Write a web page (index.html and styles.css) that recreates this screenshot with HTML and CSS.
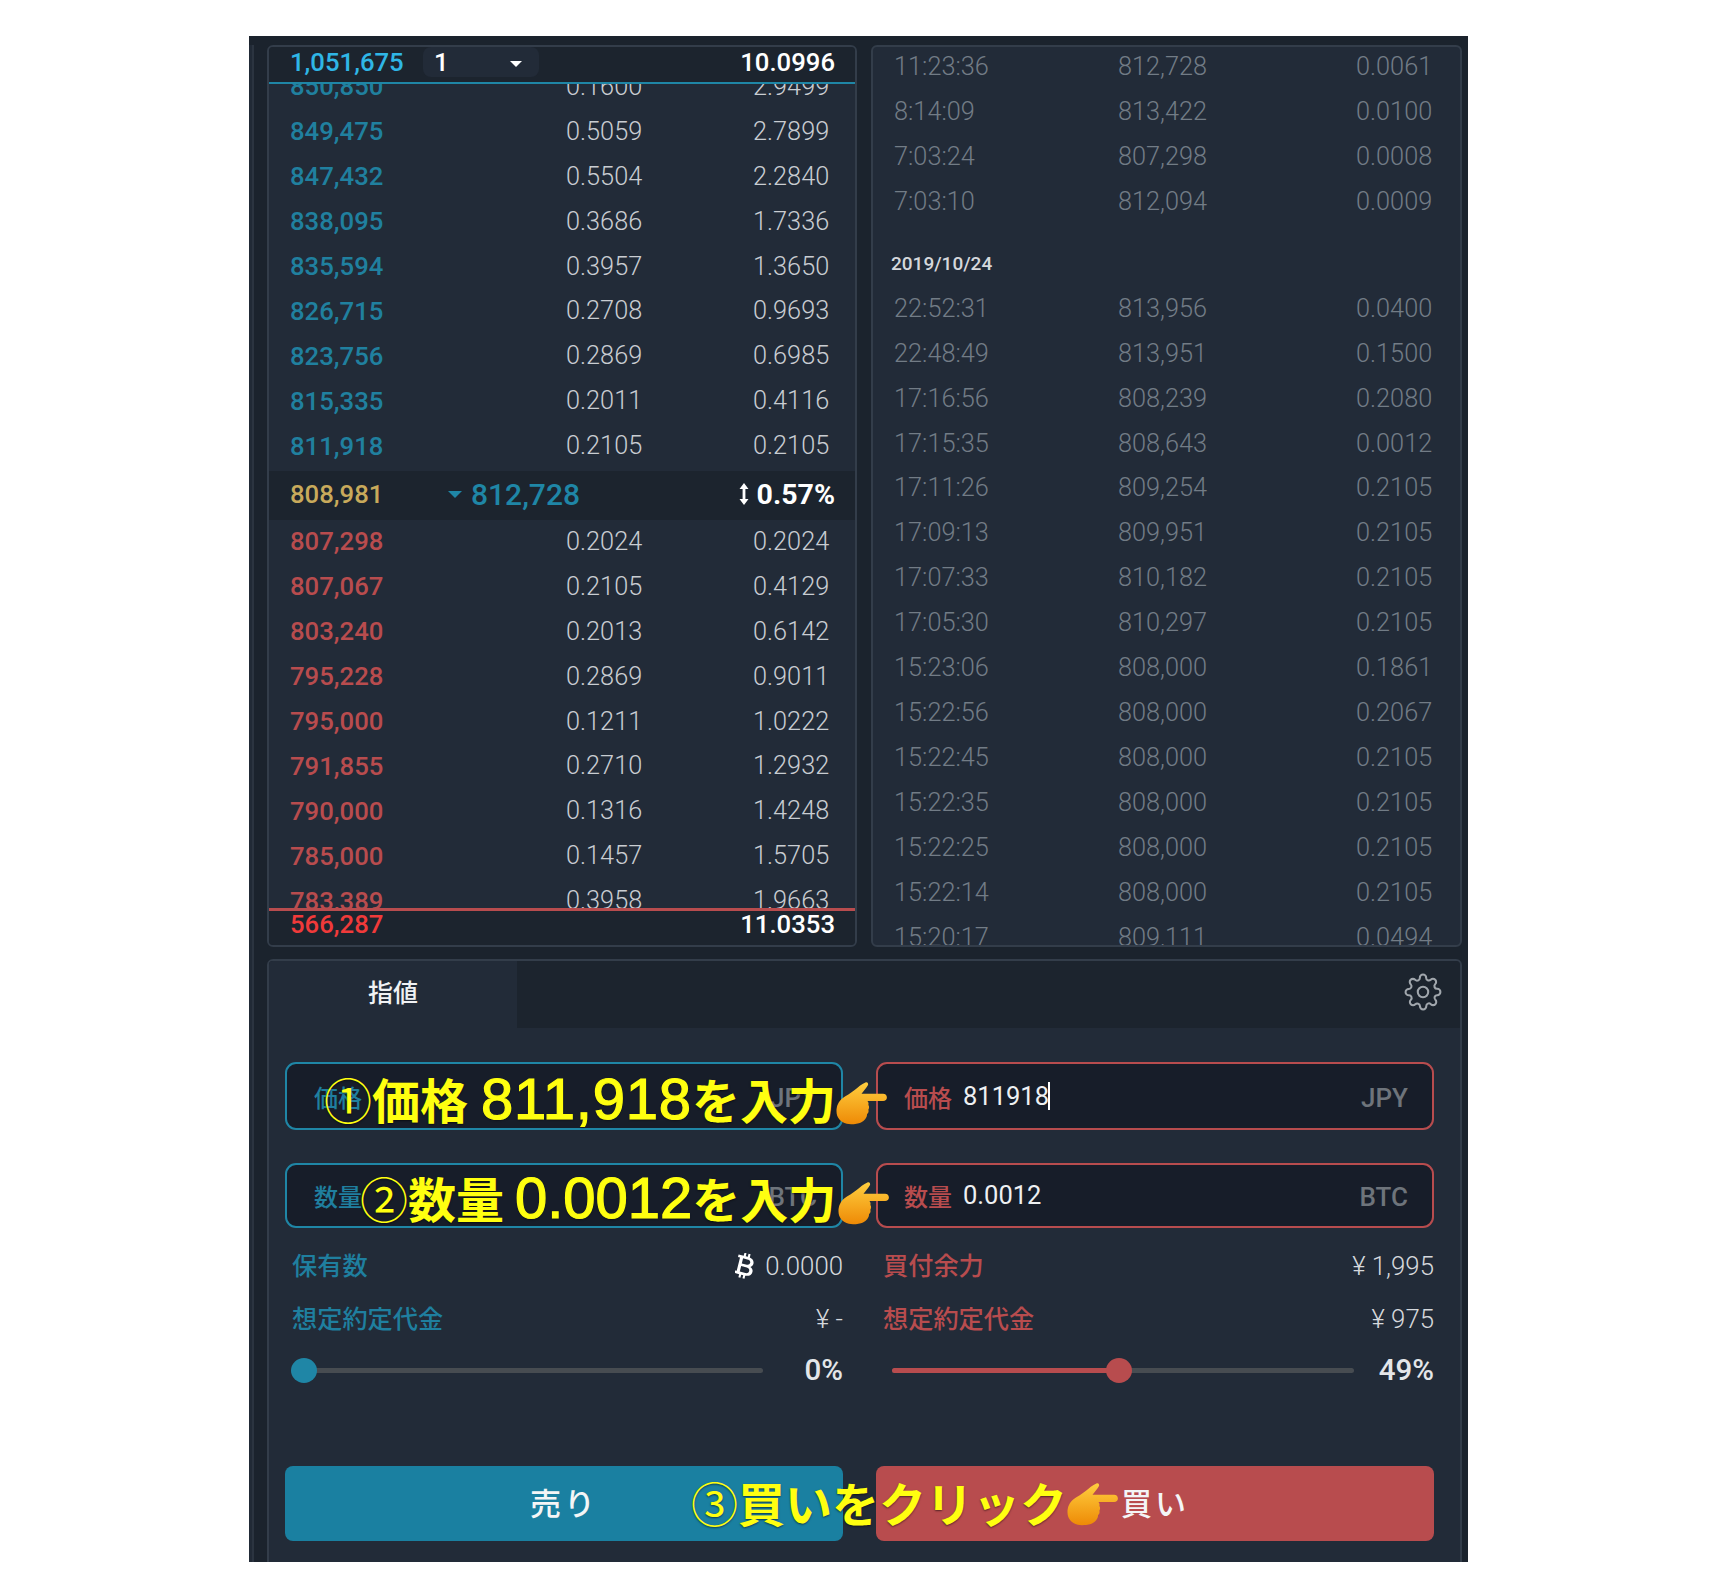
FILE: index.html
```html
<!DOCTYPE html>
<html lang="ja">
<head>
<meta charset="utf-8">
<title>注文</title>
<link rel="stylesheet" href="styles.css">
</head>
<body>
<svg class="defs" width="0" height="0" aria-hidden="true">
  <defs>
    <linearGradient id="handfill" x1="0" y1="0" x2="0" y2="1">
      <stop offset="0" stop-color="#ffcf3f"/>
      <stop offset="1" stop-color="#ee8a06"/>
    </linearGradient>
    <symbol id="hand" viewBox="0 0 52 44">
      <path fill="url(#handfill)" d="M30 1c2-.8 3.500 1 2.500 3-1.500 2.800-4 5.500-6.500 8.500h22c2.400 0 3.900 1.700 3.900 3.800S50.400 20 48 20H32c1 1 1.500 2.600 1 4 1 1.400 1 3.400 0 4.800.6 1.700 0 3.400-1.300 4.500 0 3.700-2.700 7-6.200 8.500-3.500 1.500-10 2.400-14.500 1.400C4.500 41.500.5 37 .5 30.500c0-5.500 2-10 6.500-13.500 3-2.300 8-5 12-8.300C22.500 6 26 2.500 30 1z"/>
    </symbol>
  </defs>
</svg>
<main class="app">
  <div class="stub"></div>
  <section class="top">
    <div class="panel book">
      <header class="book-head">
        <span class="total-price ask">1,051,675</span>
        <span class="select"><span>1</span><i class="caret"></i></span>
        <span class="total-size">10.0996</span>
      </header>
      <div class="book-list">
        <div class="book-rows">
          <div class="row sell"><b>850,850</b><span>0.1600</span><span>2.9499</span></div>
          <div class="row sell"><b>849,475</b><span>0.5059</span><span>2.7899</span></div>
          <div class="row sell"><b>847,432</b><span>0.5504</span><span>2.2840</span></div>
          <div class="row sell"><b>838,095</b><span>0.3686</span><span>1.7336</span></div>
          <div class="row sell"><b>835,594</b><span>0.3957</span><span>1.3650</span></div>
          <div class="row sell"><b>826,715</b><span>0.2708</span><span>0.9693</span></div>
          <div class="row sell"><b>823,756</b><span>0.2869</span><span>0.6985</span></div>
          <div class="row sell"><b>815,335</b><span>0.2011</span><span>0.4116</span></div>
          <div class="row sell"><b>811,918</b><span>0.2105</span><span>0.2105</span></div>
          <div class="mid">
            <span class="mid-spot">808,981</span>
            <span class="mid-last"><i class="caret teal"></i>812,728</span>
            <span class="mid-pct">
              <svg class="updown" viewBox="0 0 10 22" aria-hidden="true"><path fill="#fff" d="M5 0l4.500 6H6.400v10H9.500L5 22 .5 16h3.100V6H.5z"/></svg>
              0.57%
            </span>
          </div>
          <div class="row buy"><b>807,298</b><span>0.2024</span><span>0.2024</span></div>
          <div class="row buy"><b>807,067</b><span>0.2105</span><span>0.4129</span></div>
          <div class="row buy"><b>803,240</b><span>0.2013</span><span>0.6142</span></div>
          <div class="row buy"><b>795,228</b><span>0.2869</span><span>0.9011</span></div>
          <div class="row buy"><b>795,000</b><span>0.1211</span><span>1.0222</span></div>
          <div class="row buy"><b>791,855</b><span>0.2710</span><span>1.2932</span></div>
          <div class="row buy"><b>790,000</b><span>0.1316</span><span>1.4248</span></div>
          <div class="row buy"><b>785,000</b><span>0.1457</span><span>1.5705</span></div>
          <div class="row buy"><b>783,389</b><span>0.3958</span><span>1.9663</span></div>
        </div>
      </div>
      <footer class="book-foot">
        <span class="total-price bid">566,287</span>
        <span class="total-size">11.0353</span>
      </footer>
    </div>
    <div class="panel trades">
      <div class="trade-list">
        <div class="trade"><span>11:23:36</span><span>812,728</span><span>0.0061</span></div>
        <div class="trade"><span>8:14:09</span><span>813,422</span><span>0.0100</span></div>
        <div class="trade"><span>7:03:24</span><span>807,298</span><span>0.0008</span></div>
        <div class="trade"><span>7:03:10</span><span>812,094</span><span>0.0009</span></div>
        <div class="trade-date">2019/10/24</div>
        <div class="trade"><span>22:52:31</span><span>813,956</span><span>0.0400</span></div>
        <div class="trade"><span>22:48:49</span><span>813,951</span><span>0.1500</span></div>
        <div class="trade"><span>17:16:56</span><span>808,239</span><span>0.2080</span></div>
        <div class="trade"><span>17:15:35</span><span>808,643</span><span>0.0012</span></div>
        <div class="trade"><span>17:11:26</span><span>809,254</span><span>0.2105</span></div>
        <div class="trade"><span>17:09:13</span><span>809,951</span><span>0.2105</span></div>
        <div class="trade"><span>17:07:33</span><span>810,182</span><span>0.2105</span></div>
        <div class="trade"><span>17:05:30</span><span>810,297</span><span>0.2105</span></div>
        <div class="trade"><span>15:23:06</span><span>808,000</span><span>0.1861</span></div>
        <div class="trade"><span>15:22:56</span><span>808,000</span><span>0.2067</span></div>
        <div class="trade"><span>15:22:45</span><span>808,000</span><span>0.2105</span></div>
        <div class="trade"><span>15:22:35</span><span>808,000</span><span>0.2105</span></div>
        <div class="trade"><span>15:22:25</span><span>808,000</span><span>0.2105</span></div>
        <div class="trade"><span>15:22:14</span><span>808,000</span><span>0.2105</span></div>
        <div class="trade"><span>15:20:17</span><span>809,111</span><span>0.0494</span></div>
      </div>
    </div>
  </section>
  <section class="panel order">
    <div class="tabs">
      <div class="tab">指値</div>
      <svg class="gear" viewBox="0 0 24 24" aria-hidden="true">
        <circle cx="12" cy="12" r="3.300"/>
        <path d="M19.400 15a1.650 1.650 0 0 0 .33 1.820l.06.06a2 2 0 0 1 0 2.830 2 2 0 0 1-2.830 0l-.06-.06a1.650 1.650 0 0 0-1.820-.33 1.650 1.650 0 0 0-1 1.510V21a2 2 0 0 1-2 2 2 2 0 0 1-2-2v-.09A1.650 1.650 0 0 0 9 19.400a1.650 1.650 0 0 0-1.820.33l-.06.06a2 2 0 0 1-2.830 0 2 2 0 0 1 0-2.830l.06-.06a1.650 1.650 0 0 0 .33-1.820 1.650 1.650 0 0 0-1.510-1H3a2 2 0 0 1-2-2 2 2 0 0 1 2-2h.09A1.650 1.650 0 0 0 4.600 9a1.650 1.650 0 0 0-.33-1.820l-.06-.06a2 2 0 0 1 0-2.830 2 2 0 0 1 2.830 0l.06.06a1.650 1.650 0 0 0 1.820.33H9a1.650 1.650 0 0 0 1-1.510V3a2 2 0 0 1 2-2 2 2 0 0 1 2 2v.09a1.650 1.650 0 0 0 1 1.510 1.650 1.650 0 0 0 1.820-.33l.06-.06a2 2 0 0 1 2.830 0 2 2 0 0 1 0 2.830l-.06.06a1.650 1.650 0 0 0-.33 1.820V9a1.650 1.650 0 0 0 1.510 1H21a2 2 0 0 1 2 2 2 2 0 0 1-2 2h-.09a1.650 1.650 0 0 0-1.510 1z"/>
      </svg>
    </div>
    <div class="form">
      <div class="side sell-side">
        <div class="field first"><span class="field-label">価格</span><span class="field-unit">JPY</span></div>
        <div class="field second"><span class="field-label">数量</span><span class="field-unit">BTC</span></div>
        <div class="info first-info"><span class="info-label">保有数</span><span class="info-value"><svg class="btc" viewBox="0 0 20 24" aria-hidden="true"><g transform="rotate(14 10 12)"><path fill="#fff" fill-rule="evenodd" d="M6 0h2v3h2V0h2v3.200c3 .5 4.800 2.300 4.800 4.900 0 1.700-.8 2.900-2.100 3.600 1.900.6 3.100 2.100 3.100 4.200 0 3.200-2.300 4.900-5.800 5.100v3h-2v-3H8v3H6v-3H1v-2.500h2V5.500H1V3h5zm0 5.500v5h5c1.500 0 2.600-1 2.600-2.500S12.500 5.500 11 5.500zm0 7.500v5.500h5.500c1.800 0 3-1.100 3-2.800S13.300 13 11.500 13z"/></g></svg>0.0000</span></div>
        <div class="info"><span class="info-label">想定約定代金</span><span class="info-value">¥ -</span></div>
        <div class="slider"><div class="track"><i class="thumb at-zero"></i></div><span class="pct">0%</span></div>
        <button class="action" type="button">売り</button>
      </div>
      <div class="side buy-side">
        <div class="field first"><span class="field-label">価格</span><span class="field-value">811918</span><i class="cursor"></i><span class="field-unit">JPY</span></div>
        <div class="field second"><span class="field-label">数量</span><span class="field-value">0.0012</span><span class="field-unit">BTC</span></div>
        <div class="info first-info"><span class="info-label">買付余力</span><span class="info-value">¥ 1,995</span></div>
        <div class="info"><span class="info-label">想定約定代金</span><span class="info-value">¥ 975</span></div>
        <div class="slider"><div class="track"><i class="fill"></i><i class="thumb at-half"></i></div><span class="pct">49%</span></div>
        <button class="action" type="button">買い</button>
      </div>
    </div>
  </section>
  <div class="note note-1"><span class="circ">①</span>価格 <span class="num">811,918</span>を入力</div>
  <div class="note note-2"><span class="circ">②</span>数量 <span class="num">0.0012</span>を入力</div>
  <div class="note note-3"><span class="circ">③</span>買いをクリック</div>
  <svg class="hand hand-1" aria-hidden="true"><use href="#hand"/></svg>
  <svg class="hand hand-2" aria-hidden="true"><use href="#hand"/></svg>
  <svg class="hand hand-3" aria-hidden="true"><use href="#hand"/></svg>
</main>
</body>
</html>
```

FILE: styles.css
```css
* { box-sizing: border-box; }
html, body { margin: 0; padding: 0; background: #fff; }
body { font-family: Roboto, "Noto Sans CJK JP", sans-serif; color: #c9cdd2; }
.defs { position: absolute; }

.app {
  position: relative;
  width: 1219px;
  height: 1526px;
  margin: 36px 0 0 249px;
  padding: 9px 6px 0 18px;
  background: #1b232d;
  overflow: hidden;
}
.stub {
  position: absolute;
  left: 0;
  top: 9px;
  width: 5px;
  height: 1517px;
  background: #212a36;
  border-right: 2px solid #2b3440;
}

.panel {
  background: #222b38;
  border: 2px solid #333d4a;
  border-radius: 6px;
  overflow: hidden;
}
.top { display: flex; gap: 14px; height: 902px; }
.book, .trades { display: flex; flex-direction: column; }
.book { width: 590px; }
.trades { width: 591px; }

/* order book */
.book-head, .book-foot {
  flex: none;
  display: flex;
  align-items: center;
  padding: 0 20px 0 21px;
  background: #1c242e;
  font-size: 25.700px;
  font-weight: 500;
  position: relative;
  z-index: 1;
}
.book-head { height: 37px; padding-bottom: 6px; border-bottom: 2px solid #1f86a6; }
.book-foot { height: 37px; padding-bottom: 9px; border-top: 3px solid #b84c4e; }
.total-price { width: 133px; }
.ask { color: #2fb6e6; }
.bid { color: #f03a3a; }
.total-size { margin-left: auto; color: #fff; }
.select {
  width: 116px;
  height: 30px;
  padding: 0 17px 0 11px;
  background: #222b38;
  border-radius: 8px;
  color: #fff;
  display: flex;
  align-items: center;
  justify-content: space-between;
}
.caret {
  display: block;
  width: 0;
  height: 0;
  margin-top: 4px;
  border-left: 6px solid transparent;
  border-right: 6px solid transparent;
  border-top: 6px solid #fff;
}
.caret.teal { margin-top: 0; border-left-width: 7px; border-right-width: 7px; border-top-width: 7px; border-top-color: #1f86a6; margin-right: 9px; }

.book-list { flex: 1; min-height: 0; overflow: hidden; }
.book-rows { margin-top: -20px; }
.row {
  display: grid;
  grid-template-columns: 276px 187px 1fr;
  height: 44.9px;
  padding-left: 21px;
  align-items: center;
  font-size: 25.300px;
  font-weight: 300;
  color: #c9cdd2;
}
.row b { font-size: 25.700px; font-weight: 500; }
.sell b { color: #20809f; }
.buy b { color: #b84c4e; }
.mid {
  display: flex;
  align-items: center;
  height: 49px;
  margin: 3px 0 -1px;
  padding: 0 20px 3px 21px;
  background: #1c242e;
}
.mid-spot { width: 158px; font-size: 25.700px; font-weight: 500; color: #c8aa5b; }
.mid-last { display: flex; align-items: center; font-size: 30px; font-weight: 500; color: #1f86a6; }
.mid-pct { margin-left: auto; display: flex; align-items: center; gap: 8px; font-size: 28.500px; font-weight: 700; color: #fff; }
.updown { width: 10px; height: 22px; }

/* trades */
.trade-list { margin-top: -3px; }
.trade {
  display: grid;
  grid-template-columns: 224px 238px 1fr;
  height: 44.95px;
  padding-left: 21px;
  align-items: center;
  font-size: 25.300px;
  font-weight: 300;
  color: #727c86;
}
.trade-date {
  height: 62px;
  padding: 25px 0 0 18px;
  font-size: 19px;
  font-weight: 500;
  line-height: 30px;
  color: #d5d8dc;
}

/* order form */
.order { height: 640px; margin-top: 12px; }
.tabs {
  display: flex;
  align-items: center;
  height: 67px;
  background: #1c242e;
}
.tab {
  width: 248px;
  height: 100%;
  padding-bottom: 7px;
  background: #222b38;
  display: flex;
  align-items: center;
  justify-content: center;
  font-size: 25px;
  font-weight: 500;
  color: #f0f2f4;
}
.gear {
  width: 38px;
  height: 38px;
  margin: 0 18px 5px auto;
  fill: none;
  stroke: #a0a6ac;
  stroke-width: 1.300;
}
.form {
  display: grid;
  grid-template-columns: 558px 558px;
  gap: 33px;
  padding: 34px 0 0 16px;
}
.side { display: flex; flex-direction: column; }
.field {
  display: flex;
  align-items: center;
  padding: 0 24px 0 26px;
  background: #171d29;
  border: 2.500px solid;
  border-radius: 11px;
}
.field.first { height: 68px; }
.field.second { height: 65px; margin-top: 33px; }
.sell-side .field { border-color: #1f86a6; padding-left: 27px; }
.buy-side .field { border-color: #b84c4e; }
.field-label { font-size: 24px; font-weight: 500; }
.sell-side .field-label, .sell-side .info-label { color: #1f7f9f; }
.buy-side .field-label, .buy-side .info-label { color: #b84c4e; }
.field-value { margin: -1px 0 0 11px; font-size: 25.500px; color: #eef0f2; line-height: 30px; }
.cursor { width: 2px; height: 28px; background: #fff; margin-left: -1px; }
.field-unit { margin-left: auto; padding-top: 3px; font-size: 26px; font-weight: 500; color: #6e747b; }

.info {
  display: flex;
  justify-content: space-between;
  align-items: center;
  height: 53px;
  padding-left: 7px;
}
.first-info { margin-top: 11px; }
.info-label { margin-bottom: 3px; font-size: 25.200px; font-weight: 500; }
.info-value { display: flex; align-items: center; gap: 9px; font-size: 25.800px; font-weight: 300; color: #d5d8dc; }
.btc { width: 21px; height: 26px; }

.slider {
  display: flex;
  align-items: center;
  height: 50px;
}
.sell-side .slider { padding-left: 6px; }
.buy-side .slider { padding-left: 16px; }
.track { position: relative; height: 5px; background: #474c51; border-radius: 3px; }
.sell-side .track { width: 472px; }
.buy-side .track { width: 462px; }
.fill { position: absolute; left: 0; top: 0; height: 100%; width: 49%; background: #b84c4e; border-radius: 3px; }
.thumb { position: absolute; top: -10px; width: 26px; height: 25px; border-radius: 50%; }
.at-zero { left: 0; background: #1f86a6; }
.at-half { left: 214px; background: #b84c4e; }
.pct { margin-left: auto; font-size: 29.500px; font-weight: 500; color: #e4e6e9; }

.action {
  height: 75px;
  margin-top: 71px;
  padding-bottom: 5px;
  border: 0;
  border-radius: 8px;
  font-family: inherit;
  font-size: 31px;
  font-weight: 500;
  letter-spacing: 3px;
  color: #f4f5f6;
}
.sell-side .action { background: #1a80a1; }
.buy-side .action { background: #b84c4e; }

/* annotations laid over the screenshot */
.note {
  position: absolute;
  font-family: "Noto Sans CJK JP", sans-serif;
  font-size: 48px;
  font-weight: 700;
  line-height: 60px;
  color: #ffff10;
  white-space: nowrap;
  text-shadow: 0 1px 2px rgba(0, 0, 0, .55);
}
.circ { font-weight: 400; }
.num { font-family: "Liberation Sans", sans-serif; font-size: 58px; font-weight: 400; line-height: 58px; -webkit-text-stroke: 1.200px #ffff10; }
.note-1 { left: 75px; top: 1032px; }
.note-1 .num { margin-left: 2px; letter-spacing: .8px; }
.note-2 { left: 111px; top: 1131px; }
.note-3 { left: 442px; top: 1436px; font-size: 47px; }
.hand { position: absolute; width: 51px; height: 44px; }
.hand-1 { left: 587px; top: 1045px; }
.hand-2 { left: 589px; top: 1145px; }
.hand-3 { left: 818px; top: 1446px; }
```
